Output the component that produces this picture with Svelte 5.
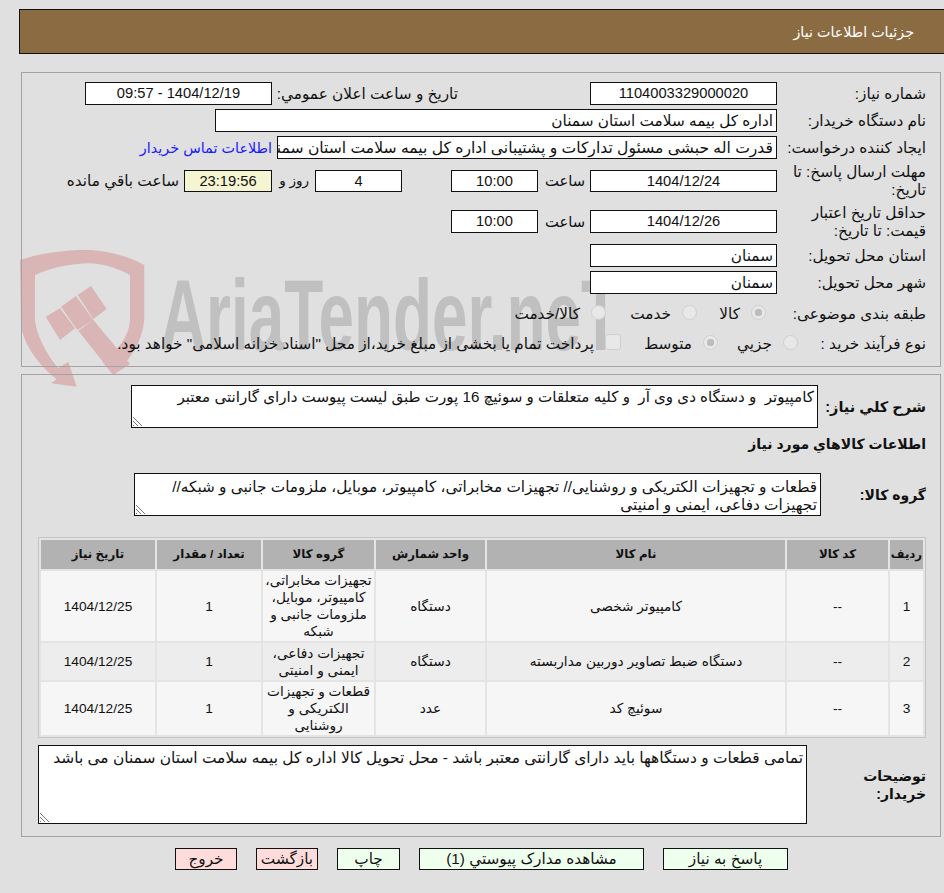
<script lang="ts">
  // Tender detail page: header bar, summary fields, goods table and action buttons.
  const rows = [
    { n: 1, name: 'کامپیوتر شخصی', unit: 'دستگاه', group: 'تجهیزات مخابراتی، کامپیوتر، موبایل، ملزومات جانبی و شبکه' },
    { n: 2, name: 'دستگاه ضبط تصاویر دوربین مداربسته', unit: 'دستگاه', group: 'تجهیزات دفاعی، ایمنی و امنیتی' },
    { n: 3, name: 'سوئیچ کد', unit: 'عدد', group: 'قطعات و تجهیزات الکتریکی و روشنایی' },
  ];
</script>

<div class="page" dir="rtl">
  <div class="mark" aria-hidden="true" dir="ltr">
    <svg viewBox="0 0 640 160" width="640" height="160">
      <!-- shield loop ending in an arrow, with the gavel inside; coords from a 3x crop -->
      <g class="shield" transform="translate(15 0) scale(0.3333)">
        <path d="M15 60 C90 35 170 28 230 30 C290 35 345 50 388 75 L388 240 C380 310 345 360 295 405 L262 365 C310 330 342 290 345 240 L345 105 C300 80 260 72 225 70 C165 70 105 85 60 105 L60 240 C65 290 100 350 130 385 L160 365 L185 440 L108 430 L125 418 C70 375 22 310 18 250 Z" />
        <path d="M92 230 L135 205 L180 265 L135 300 Z M138 200 L183 168 L235 240 L187 270 Z M188 165 L228 138 L275 207 L235 237 Z M190 272 L235 240 L345 372 L295 405 Z" />
      </g>
      <text class="brand" x="160" y="110" textLength="460" lengthAdjust="spacingAndGlyphs">AriaTender.neT</text>
    </svg>
  </div>

  <header class="bar">جزئیات اطلاعات نیاز</header>

  <section class="panel top">
    <div class="row">
      <span class="lbl">شماره نیاز:</span>
      <span class="box date center">1104003329000020</span>
      <span class="lbl mid">تاریخ و ساعت اعلان عمومي:</span>
      <span class="box date center">1404/12/19 - 09:57</span>
    </div>
    <div class="row">
      <span class="lbl">نام دستگاه خریدار:</span>
      <span class="box buyer">اداره کل بیمه سلامت استان سمنان</span>
    </div>
    <div class="row">
      <span class="lbl">ایجاد کننده درخواست:</span>
      <span class="box creator">قدرت اله حبشی مسئول تدارکات و پشتیبانی اداره کل بیمه سلامت استان سمنان</span>
      <span class="contact">اطلاعات تماس خریدار</span>
    </div>
    <div class="row r4">
      <span class="lbl two">مهلت ارسال پاسخ: تا تاریخ:</span>
      <span class="box date center">1404/12/24</span>
      <span class="unit hour">ساعت</span>
      <span class="box time center">10:00</span>
      <span class="box time days center">4</span>
      <span class="unit and">روز و</span>
      <span class="box clock center">23:19:56</span>
      <span class="unit">ساعت باقي مانده</span>
    </div>
    <div class="row r5">
      <span class="lbl two">حداقل تاریخ اعتبار قیمت: تا تاریخ:</span>
      <span class="box date center">1404/12/26</span>
      <span class="unit hour">ساعت</span>
      <span class="box time center">10:00</span>
    </div>
    <div class="row">
      <span class="lbl">استان محل تحویل:</span>
      <span class="box date">سمنان</span>
    </div>
    <div class="row">
      <span class="lbl">شهر محل تحویل:</span>
      <span class="box date">سمنان</span>
    </div>
    <div class="row r8">
      <span class="lbl wide">طبقه بندی موضوعی:</span>
      <span class="opt k1"><i class="radio on"></i>کالا</span>
      <span class="opt k2"><i class="radio"></i>خدمت</span>
      <span class="opt"><i class="radio"></i>کالا/خدمت</span>
    </div>
    <div class="row r9">
      <span class="lbl slim">نوع فرآیند خرید :</span>
      <span class="opt p1"><i class="radio"></i>جزيي</span>
      <span class="opt p2"><i class="radio on"></i>متوسط</span>
      <span class="opt"><i class="check"></i>پرداخت تمام یا بخشی از مبلغ خرید،از محل "اسناد خزانه اسلامی" خواهد بود.</span>
    </div>
  </section>

  <section class="panel goods">
    <div class="desc">
      <b class="w1">شرح کلي نیاز:</b>
      <div class="area a1">کامپیوتر  و دستگاه دی وی آر  و کلیه متعلقات و سوئیچ 16 پورت طبق لیست پیوست دارای گارانتی معتبر<i class="grip"></i></div>
    </div>
    <h3>اطلاعات کالاهاي مورد نیاز</h3>
    <div class="desc">
      <b class="w2">گروه کالا:</b>
      <div class="area a2"> قطعات و تجهیزات الکتریکی و روشنایی// تجهیزات مخابراتی، کامپیوتر، موبایل، ملزومات جانبی و شبکه// تجهیزات دفاعی، ایمنی و امنیتی<i class="grip"></i></div>
    </div>
    <table>
      <thead>
        <tr>
          <th class="c1">ردیف</th>
          <th class="c2">کد کالا</th>
          <th class="c3">نام کالا</th>
          <th class="c4">واحد شمارش</th>
          <th class="c5">گروه کالا</th>
          <th class="c6">تعداد / مقدار</th>
          <th>تاریخ نیاز</th>
        </tr>
      </thead>
      <tbody>
        {#each rows as r}
          <tr>
            <td>{r.n}</td>
            <td>--</td>
            <td>{r.name}</td>
            <td>{r.unit}</td>
            <td>{r.group}</td>
            <td>1</td>
            <td>1404/12/25</td>
          </tr>
        {/each}
      </tbody>
    </table>
    <div class="desc note">
      <b class="w3">توضیحات خریدار:</b>
      <div class="area a3">تمامی قطعات و دستگاهها باید دارای گارانتی معتبر باشد - محل تحویل کالا اداره کل بیمه سلامت استان سمنان می باشد<i class="grip"></i></div>
    </div>
  </section>

  <div class="actions">
    <button class="ok b1">پاسخ به نیاز</button>
    <button class="ok b2">مشاهده مدارک پیوستي (1)</button>
    <button class="ok b3">چاپ</button>
    <button class="no b4">بازگشت</button>
    <button class="no b4">خروج</button>
  </div>
</div>

<style>
  :global(body) {
    margin: 0;
    background: #e0e0e0;
    overflow: hidden;
  }
  .page {
    position: relative;
    width: 944px;
    height: 893px;
    overflow: hidden;
    padding-top: 9px;
    box-sizing: border-box;
    font: 15.3px/18px "Liberation Sans", "DejaVu Sans", sans-serif;
    color: #111;
  }
  .mark {
    position: absolute;
    left: 0;
    top: 240px;
  }
  .shield { fill: #d9b5b5; }
  .brand {
    font: bold 100px "Liberation Sans", sans-serif;
    fill: #c0c0c0;
  }
  .bar {
    position: relative;
    box-sizing: border-box;
    height: 45px;
    margin-left: 19px;
    padding: 13px 30px 0 0;
    background: #8b6c42;
    border: 1px solid #111;
    border-right: 0;
    color: #fff;
    font-size: 14.3px;
  }
  .panel {
    position: relative;
    box-sizing: border-box;
    width: 920px;
    margin: 0 3px 0 21px;
    border: 1px solid #a3a3a3;
  }
  .top {
    margin-top: 18px;
    height: 295px;
    padding: 9px 14px 0 0;
  }
  .row {
    display: flex;
    align-items: center;
    height: 23px;
    margin-bottom: 4px;
    white-space: nowrap;
  }
  .lbl {
    width: 149px;
    flex: none;
  }
  .two {
    white-space: normal;
    line-height: 18px;
  }
  .wide { width: 160px; }
  .slim { width: 128px; }
  .box {
    box-sizing: border-box;
    flex: none;
    height: 23px;
    padding: 0 3px;
    background: #fff;
    border: 1px solid #111;
    overflow: hidden;
    line-height: 21px;
  }
  .center { text-align: center; font-size: 14.7px; }
  .date { width: 187px; }
  .mid { width: 181px; margin-right: 132px; margin-left: 5px; }
  .buyer { width: 562px; }
  .creator { width: 500px; font-size: 15.6px; }
  .contact { margin-right: 5px; color: #1a1aff; font-size: 14.4px; }
  .r4 { margin-top: 11px; height: 22px; margin-bottom: 18px; }
  .r4 .box { height: 22px; }
  .r5 { margin-bottom: 11px; }
  .unit { margin-right: 5px; }
  .hour { width: 47px; font-size: 14.7px; }
  .and { width: 37px; margin-right: 6px; font-size: 13.5px; }
  .time { width: 87px; }
  .days { margin-right: 49px; }
  .clock { width: 88px; background: #f5f5d2; }
  .r8 { margin-top: 7px; height: 26px; }
  .r9 { height: 26px; }
  .opt { display: flex; flex: none; align-items: center; gap: 11px; }
  .k1 { width: 69px; }
  .k2 { width: 91px; }
  .p1 { width: 80px; }
  .p2 { width: 97px; }
  .radio, .check {
    display: block;
    box-sizing: border-box;
    flex: none;
    width: 15px;
    height: 15px;
    margin-top: -4px;
    background: #e8e8e8;
    border: 1px solid #cfcfcf;
    border-radius: 50%;
  }
  .radio.on { background: radial-gradient(circle, #bdbdbd 0 3.5px, #e8e8e8 4px); }
  .check { width: 16px; height: 16px; border-radius: 3px; }
  .goods {
    margin-top: 7px;
    height: 463px;
    padding: 10px 14px 0 0;
  }
  .desc {
    display: flex;
    align-items: center;
  }
  .desc b { flex: none; font-size: 14px; }
  .desc .w1 { width: 108px; font-size: 14.5px; }
  .w2 { width: 105px; }
  .w3 { box-sizing: border-box; width: 119px; padding-left: 50px; }
  .area {
    position: relative;
    box-sizing: border-box;
    flex: none;
    background: #fff;
    border: 1px solid #111;
    padding: 2px 3px;
    white-space: pre-wrap;
  }
  .a1 { width: 687px; height: 43px; font-size: 15.1px; }
  .a2 { width: 687px; height: 43px; padding-top: 4px; }
  .a3 { width: 769px; height: 79px; padding: 3px 3px; font-size: 15.45px; }
  .grip {
    position: absolute;
    left: 1px;
    bottom: 1px;
    width: 10px;
    height: 10px;
    background: repeating-linear-gradient(45deg, #777 0 1px, transparent 1px 3px);
    clip-path: polygon(0 0, 100% 100%, 0 100%);
  }
  h3 {
    margin: 7px 0 0;
    height: 38px;
    font-size: 14px;
    line-height: 18px;
  }
  table {
    box-sizing: border-box;
    width: 888px;
    margin-top: 21px;
    border: 1px solid #c4c4c4;
    border-spacing: 2px;
    background: #e4e4e4;
    table-layout: fixed;
    font-size: 13.7px;
    line-height: 17px;
  }
  th {
    height: 29px;
    padding: 0;
    background: #b2b2b2;
    font-size: 11.8px;
  }
  td {
    padding: 1px;
    text-align: center;
    background: #f6f6f6;
  }
  tbody tr:nth-child(2) td { background: #ededed; padding-block: 1.5px; }
  .c1 { width: 33px; }
  .c2 { width: 101px; }
  .c3 { width: 298px; }
  .c4 { width: 109px; }
  .c5 { width: 111px; }
  .c6 { width: 104px; }
  .note { margin-top: 7px; }
  .actions {
    display: flex;
    gap: 19px;
    margin: 11px 156px 0 0;
  }
  button {
    box-sizing: border-box;
    height: 22px;
    padding: 0;
    margin: 0;
    border: 1px solid #111;
    border-radius: 0;
    font: 15.3px "Liberation Sans", "DejaVu Sans", sans-serif;
    color: #111;
  }
  .ok { background: #eeffee; }
  .no { background: #ffdcdc; }
  .b1 { width: 125px; }
  .b2 { width: 225px; }
  .b3 { width: 63px; }
  .b4 { width: 62px; }
</style>
